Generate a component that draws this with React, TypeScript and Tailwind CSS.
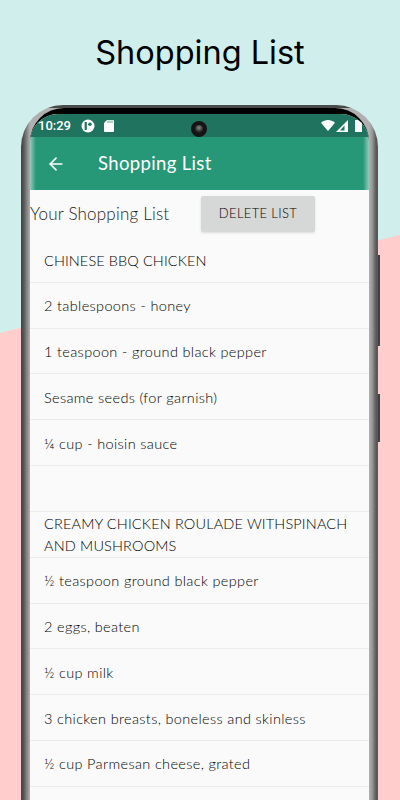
import React from 'react';
import { ArrowLeft } from 'lucide-react';

const firstItems = [
  '2 tablespoons - honey',
  '1 teaspoon - ground black pepper',
  'Sesame seeds (for garnish)',
  '¼ cup - hoisin sauce',
  '',
];

const secondItems = [
  '½ teaspoon ground black pepper',
  '2 eggs, beaten',
  '½ cup milk',
  '3 chicken breasts, boneless and skinless',
  '½ cup Parmesan cheese, grated',
  '',
];

function Row({ text }: { text: string }) {
  return (
    <div className="h-[45.8px] shrink-0 border-b border-[#ececec] pl-[14px] pt-[2px] flex items-center text-[14.5px] tracking-[0.35px] font-light text-black">
      {text}
    </div>
  );
}

function StatusBar() {
  return (
    <div className="h-[23px] bg-[#20735f] flex items-center relative text-white">
      <span className="ml-[8px] text-[13px] font-medium font-['Roboto',sans-serif]">10:29</span>
      <svg className="ml-[10px]" width="14" height="14" viewBox="0 0 14 14">
        <circle cx="7" cy="7" r="6.5" fill="#fff" />
        <path d="M3.6 3h2.2v8H3.6z" fill="#20735f" />
        <circle cx="8.9" cy="5.2" r="1.8" fill="#20735f" />
      </svg>
      <svg className="ml-[9px]" width="10" height="12" viewBox="0 0 10 12">
        <path d="M3 0h6a1 1 0 0 1 1 1v10a1 1 0 0 1-1 1H1a1 1 0 0 1-1-1V3z" fill="#fff" />
        <path d="M4 .5v2.5M6 .5v2.5M8 .5v2.5" stroke="#20735f" strokeWidth="0.7" />
      </svg>
      <div className="absolute left-[161px] top-[7px] w-[16px] h-[16px] rounded-full bg-[#141414] flex items-center justify-center">
        <div className="w-[8px] h-[8px] rounded-full bg-[radial-gradient(circle_at_50%_35%,#8a8a8a_0,#2a2a2a_60%,#0a0a0a_100%)]" />
      </div>
      <svg className="ml-auto" width="14" height="11" viewBox="0 0 14 11">
        <path d="M0 2.8C4-.9 10-.9 14 2.8L7 11z" fill="#fff" />
      </svg>
      <svg className="ml-[1px]" width="12" height="12" viewBox="0 0 12 12">
        <path d="M12 0v12H0z" fill="#fff" />
        <path d="M8.5 5.5v5H4z" fill="#20735f" />
      </svg>
      <div className="ml-[7px] mr-[7px] w-[7px] h-[12px] bg-white" />
    </div>
  );
}

export default function App() {
  return (
    <div className="w-[400px] h-[800px] overflow-hidden bg-[linear-gradient(166.2deg,#d0efec_323.4px,#ffcdcb_323.4px)] font-['Lato',sans-serif]">
      <h1 className="h-[105px] pt-[32px] text-center text-[32.5px] leading-[42px] text-black font-['Inter',sans-serif] font-normal">
        Shopping List
      </h1>
      <div className="relative ml-[21px] w-[357px] h-[695px] rounded-t-[42px] bg-[linear-gradient(180deg,#4a4a4a_0px,#4a4a4a_3px,transparent_3px),linear-gradient(90deg,#404040_0px,#5a5a5a_3px,#b0b0b0_9px,#b0b0b0_348px,#9a9a9a_351px,#5a5a5a_355px,#555_357px)] pt-[3px] px-[9px]">
        <div className="absolute right-[-2px] top-[150px] w-[2px] h-[91px] bg-[#3c4146]" />
        <div className="absolute right-[-2px] top-[289px] w-[2px] h-[48px] bg-[#3c4146]" />
        <div className="h-full rounded-t-[34px] bg-black pt-[6px] overflow-hidden">
          <div className="h-full rounded-t-[28px] overflow-hidden bg-[#fafafa]">
            <StatusBar />
            <div className="relative h-[53px] bg-[#269777] flex items-center text-white">
              <div className="absolute left-0 top-0 h-full w-[6px] bg-gradient-to-r from-white/50 to-transparent" />
              <div className="absolute right-0 top-0 h-full w-[6px] bg-gradient-to-l from-white/50 to-transparent" />
              <ArrowLeft size={20} strokeWidth={2} className="ml-[16px]" />
              <span className="ml-[32px] text-[18.5px] tracking-[0.35px]">Shopping List</span>
            </div>
            <div className="h-[47px] flex items-center">
              <span className="text-[17px] tracking-[0.2px] font-light text-[#222]">Your Shopping List</span>
              <button className="ml-auto mr-[54px] w-[114px] h-[36px] rounded-[2px] bg-[#d6d7d7] shadow-sm text-[13px] tracking-[0.35px] font-light text-black">
                DELETE LIST
              </button>
            </div>
            <div className="flex flex-col">
              <div className="h-[45.8px] shrink-0 border-b border-[#ececec] pl-[14px] pt-[2px] flex items-center text-[14.5px] tracking-[0.1px] font-light text-black">
                CHINESE BBQ CHICKEN
              </div>
              {firstItems.map((text, i) => (
                <Row key={i} text={text} />
              ))}
              <div className="h-[46px] shrink-0 border-b border-[#ececec] pl-[14px] pr-[10px] pt-[2px] flex items-center text-[14.5px] leading-[22px] tracking-[0.16px] font-light text-black">
                CREAMY CHICKEN ROULADE WITHSPINACH AND MUSHROOMS
              </div>
              {secondItems.map((text, i) => (
                <Row key={i} text={text} />
              ))}
            </div>
          </div>
        </div>
      </div>
    </div>
  );
}
